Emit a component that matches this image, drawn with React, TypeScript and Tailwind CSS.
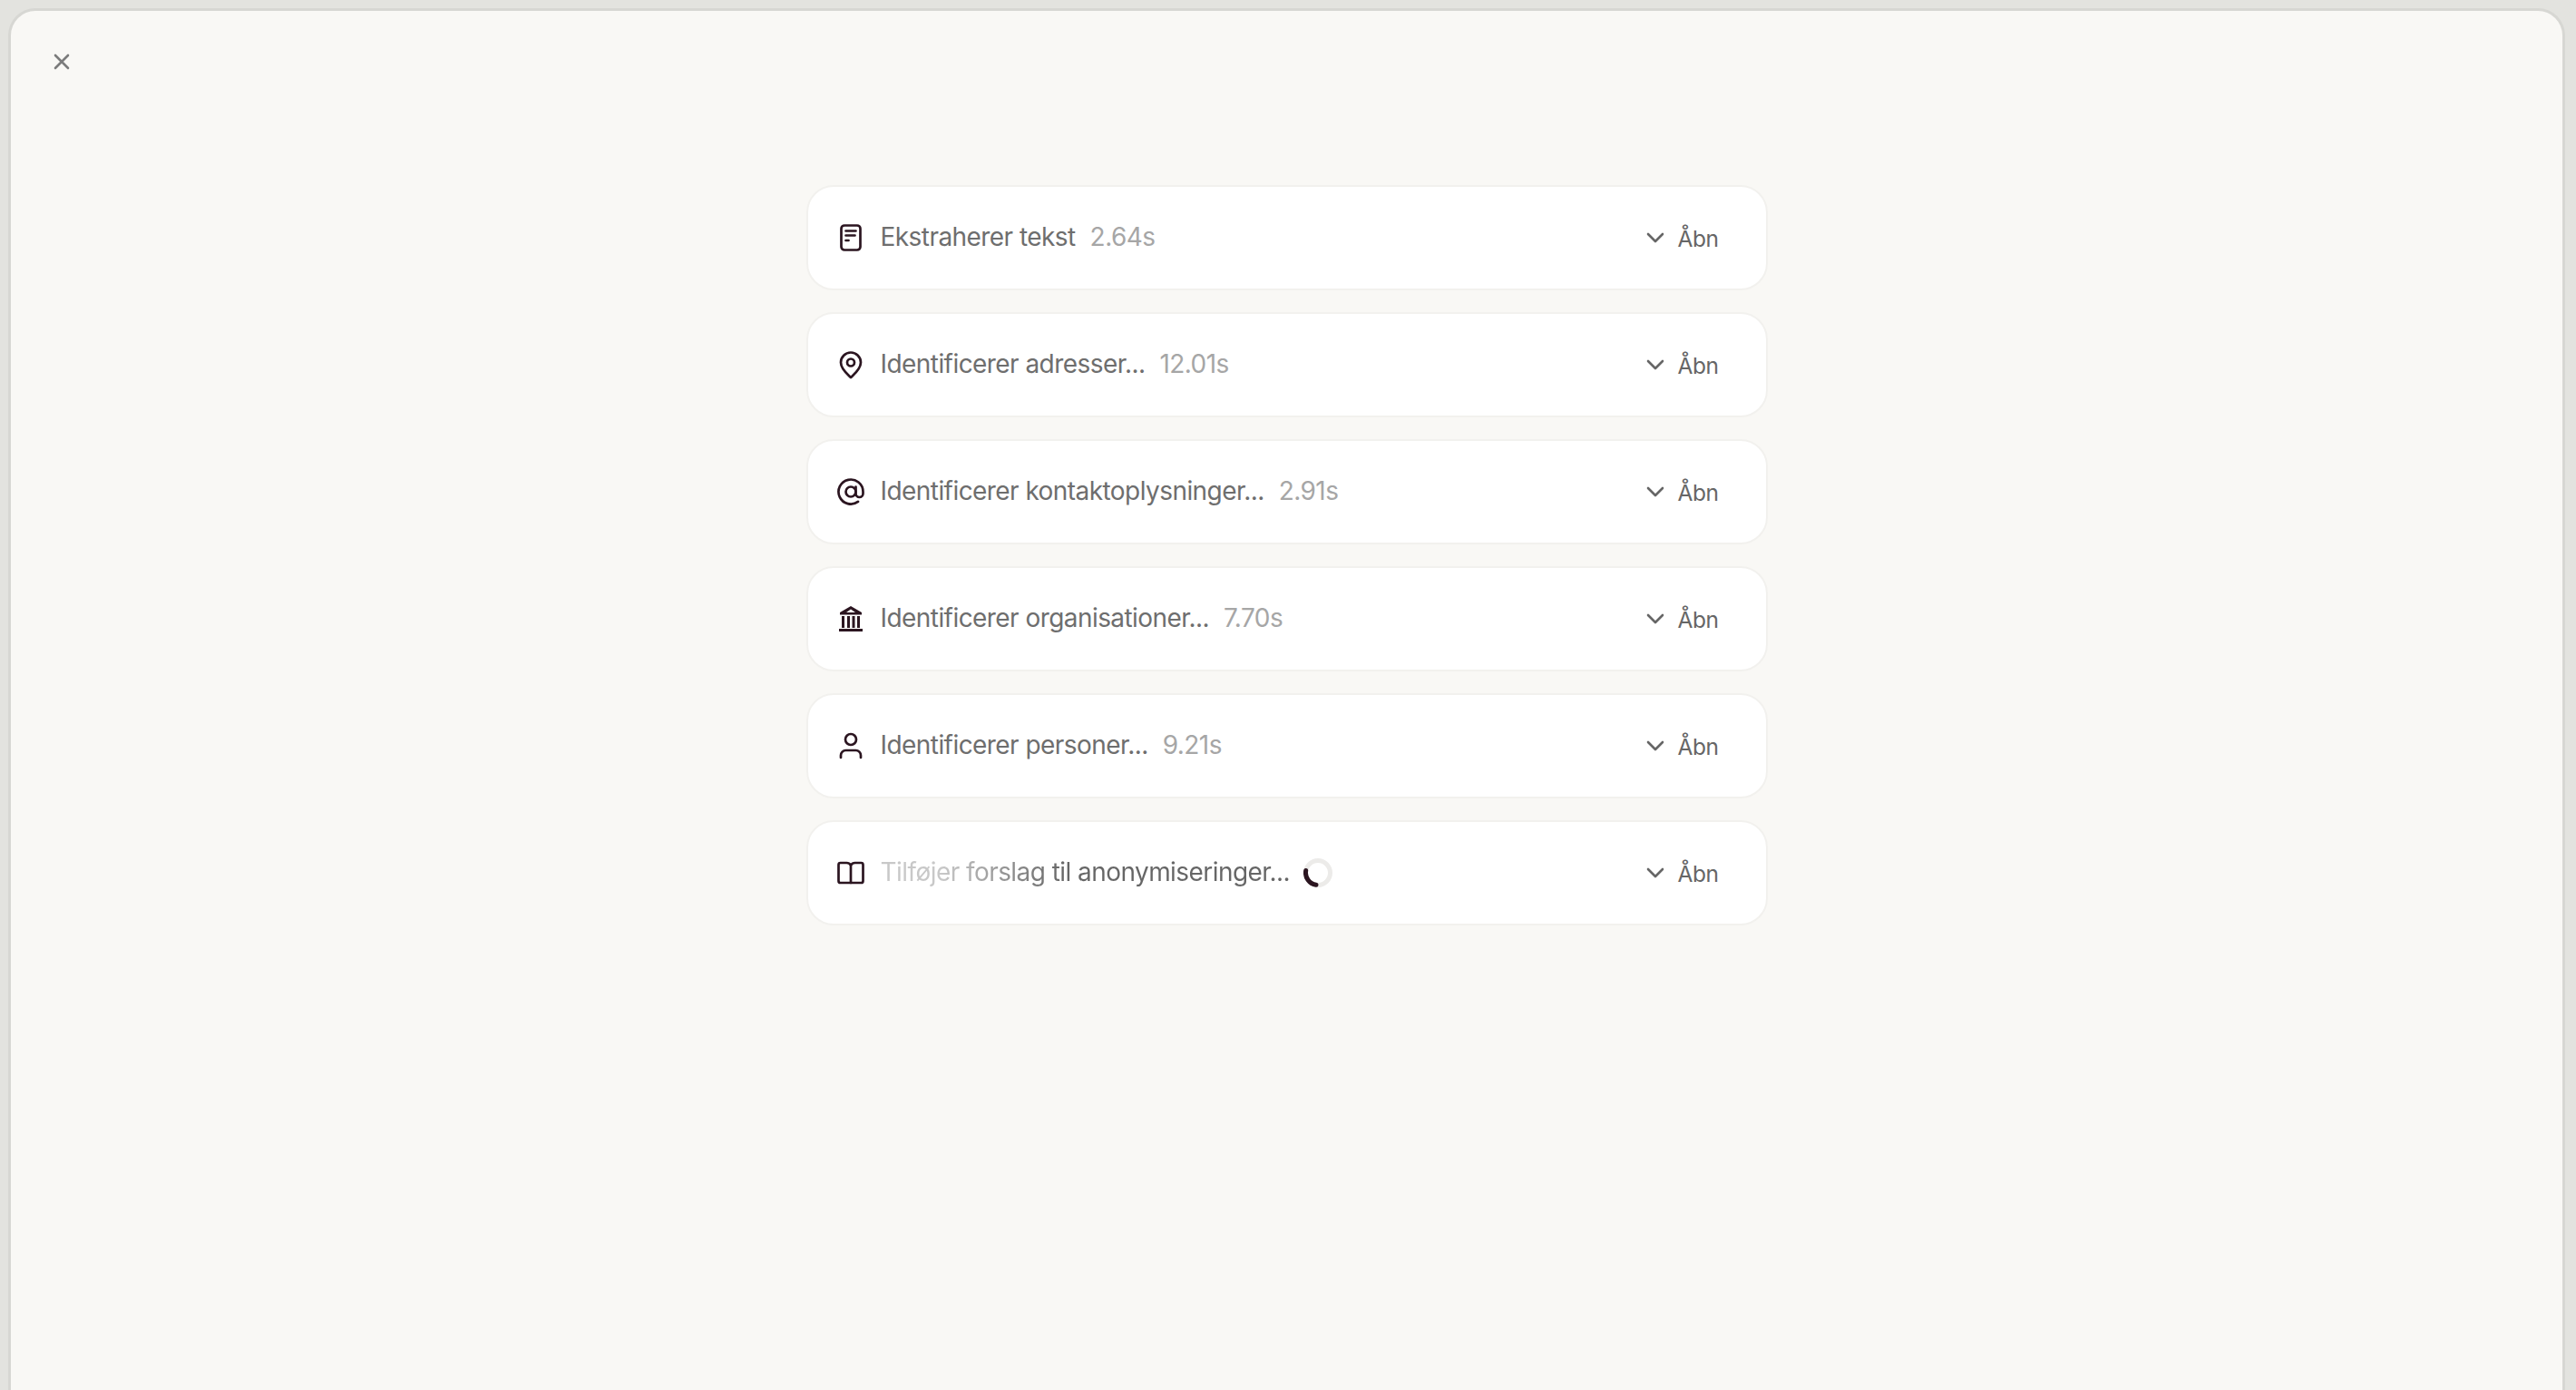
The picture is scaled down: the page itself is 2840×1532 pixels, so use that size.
import React from "react";

const stroke = "#2b1520";

const Svg = ({ children }: { children: React.ReactNode }) => (
  <svg width={32} height={32} viewBox="0 0 32 32" fill="none" stroke={stroke} strokeWidth={2.7} strokeLinecap="round" strokeLinejoin="round">
    {children}
  </svg>
);

const DocIcon = () => (
  <Svg>
    <rect x="5.5" y="2.5" width="21" height="27" rx="3.5" />
    <path d="M10.500 8.500h11M10.500 13.500h10M10.500 19h3" />
  </Svg>
);
const PinIcon = () => (
  <Svg>
    <path d="M16 30 C13 27 5 21 5 13.500 A11 11 0 0 1 27 13.500 C27 21 19 27 16 30Z" />
    <circle cx="16" cy="13.500" r="4" />
  </Svg>
);
const AtIcon = () => (
  <Svg>
    <circle cx="16" cy="16" r="5.500" />
    <path d="M21.500 10.500v7.500a4 4 0 0 0 8 0V16a13.500 13.500 0 1 0-5.500 10.900" />
  </Svg>
);
const BankIcon = () => (
  <svg width={32} height={32} viewBox="0 0 32 32" fill={stroke}>
    <path fillRule="evenodd" d="M16 2 L28 9 V11.500 H4 V9 Z M16 5.500 L11 9 H21 Z" />
    <rect x="6" y="13" width="3" height="13" />
    <rect x="12" y="13" width="3" height="13" />
    <rect x="17.500" y="13" width="3" height="13" />
    <rect x="23" y="13" width="3" height="13" />
    <rect x="3" y="27" width="26" height="3" />
  </svg>
);
const PersonIcon = () => (
  <Svg>
    <circle cx="16" cy="9" r="6" />
    <path d="M5 29v-2.500a5.500 5.500 0 0 1 5.500-5.500h11a5.500 5.500 0 0 1 5.500 5.500V29" />
  </Svg>
);
const BookIcon = () => (
  <Svg>
    <path d="M16 7.500 C15 6 13.500 5 11.500 5H4.500A2 2 0 0 0 2.500 7v18a2 2 0 0 0 2 2H27.500a2 2 0 0 0 2-2V7a2 2 0 0 0-2-2H20.500C18.500 5 17 6 16 7.500Z" />
    <path d="M16 7.500V27" />
  </Svg>
);

const Chevron = () => (
  <svg width="20" height="12" viewBox="0 0 20 12" fill="none" stroke="#666666" strokeWidth={2.6} strokeLinecap="round" strokeLinejoin="round">
    <path d="M2 2l8 8 8-8" />
  </svg>
);

const Spinner = () => (
  <svg width="32" height="32" viewBox="0 0 32 32" fill="none">
    <circle cx="16" cy="16" r="13.500" stroke="#ecebe9" strokeWidth={5} />
    <path d="M14 29.300 A13.500 13.500 0 0 1 2.700 13.500" stroke={stroke} strokeWidth={5} strokeLinecap="round" />
  </svg>
);

const rows: { icon: React.ReactNode; label: string; time?: string }[] = [
  { icon: <DocIcon />, label: "Ekstraherer tekst", time: "2.64s" },
  { icon: <PinIcon />, label: "Identificerer adresser...", time: "12.01s" },
  { icon: <AtIcon />, label: "Identificerer kontaktoplysninger...", time: "2.91s" },
  { icon: <BankIcon />, label: "Identificerer organisationer...", time: "7.70s" },
  { icon: <PersonIcon />, label: "Identificerer personer...", time: "9.21s" },
  { icon: <BookIcon />, label: "Tilføjer forslag til anonymiseringer..." },
];

export default function App() {
  return (
    <div className="h-[1532px] w-[2840px] overflow-hidden bg-[#e3e3df] pt-[9px] pl-[9px] pr-[12px] font-['Inter',sans-serif]">
      <div className="flex h-[1523px] flex-col rounded-t-[30px] border-[3px] border-b-0 border-[#d7d7d3] bg-[#f9f8f5]">
        <div className="flex pl-[47px] pt-[47px]">
          <svg width="18" height="18" viewBox="0 0 18 18" fill="none" stroke="#7b7b7b" strokeWidth={2.6} strokeLinecap="round">
            <path d="M2 2l14 14M16 2L2 16" />
          </svg>
        </div>
        <div className="mt-[127px] flex flex-col items-center gap-[24px]">
          {rows.map((r) => (
            <div
              key={r.label}
              className="flex h-[116px] w-[1060px] items-center justify-between rounded-[30px] border-2 border-[#f2f1ee] bg-white pl-[31px] pr-[52px]"
            >
              <div className="flex items-center">
                <div className="flex w-[32px] justify-center">{r.icon}</div>
                <span
                  className={
                    r.time
                      ? "ml-[17px] pb-[2px] text-[28px] leading-[40px] tracking-[-0.02em] text-[#6e6e6e]"
                      : "ml-[17px] bg-gradient-to-r from-[#c8c8c8] from-15% to-[#666666] to-45% bg-clip-text pb-[2px] text-[28px] leading-[40px] tracking-[-0.02em] text-transparent"
                  }
                >
                  {r.label}
                </span>
                {r.time ? (
                  <span className="ml-[16px] pb-[2px] text-[28px] leading-[40px] tracking-[-0.02em] text-[#a6a6a6]">{r.time}</span>
                ) : (
                  <span className="ml-[15px] flex"><Spinner /></span>
                )}
              </div>
              <div className="flex items-center gap-[15px]">
                <Chevron />
                <span className="pt-[1px] text-[24.5px] leading-[40px] tracking-[-0.02em] text-[#666666]">Åbn</span>
              </div>
            </div>
          ))}
        </div>
      </div>
    </div>
  );
}
